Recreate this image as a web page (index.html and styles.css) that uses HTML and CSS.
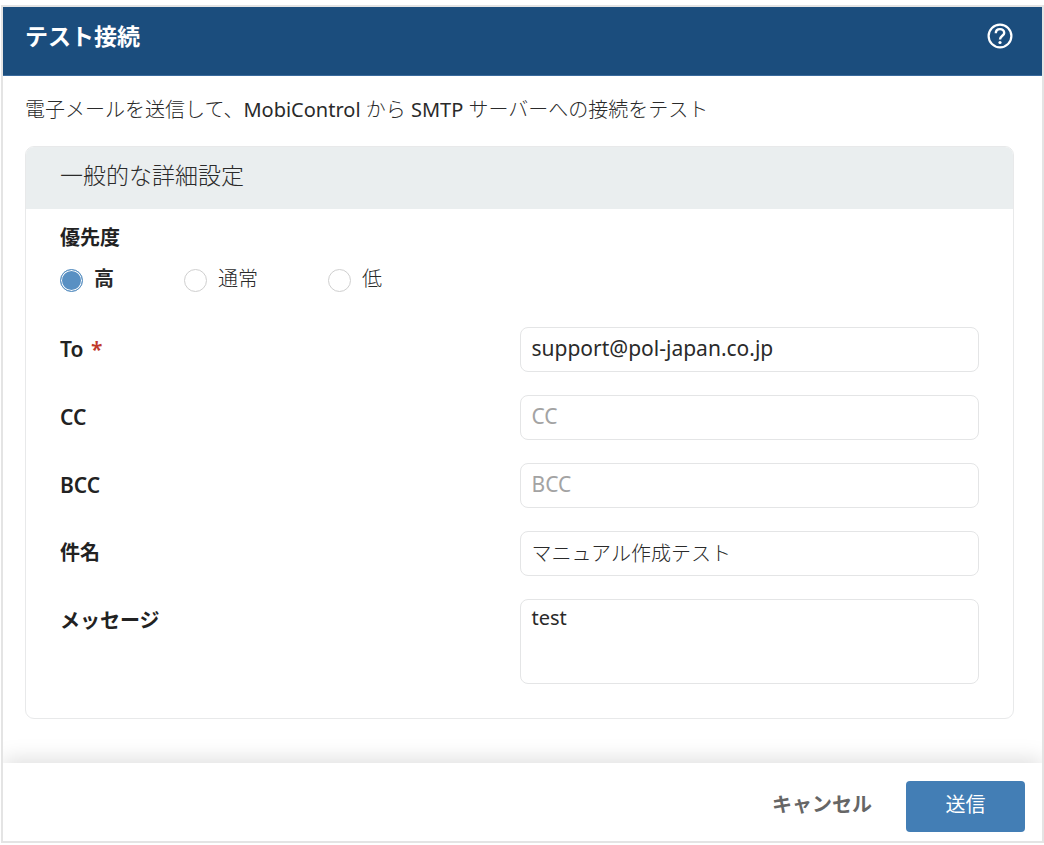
FILE: index.html
```
<!DOCTYPE html>
<html lang="ja">
<head>
<meta charset="utf-8">
<meta name="viewport" content="width=device-width, initial-scale=1">
<title>テスト接続</title>
<link rel="stylesheet" href="styles.css">
</head>
<body>
<form class="dialog">
  <header class="dialog-header">
    <h1 class="dialog-title">テスト接続</h1>
    <button class="help" type="button" aria-label="ヘルプ">
      <svg class="help-icon" viewBox="0 0 26 26" fill="none" stroke="currentColor">
        <circle cx="13" cy="13" r="11.4" stroke-width="2.2"/>
        <path d="M8.8 10.3C8.8 7.6 10.6 6.1 13 6.1S17.2 7.7 17.2 9.9C17.2 12.7 13 13 13 16.6" stroke-width="2.4"/>
        <circle cx="13" cy="19.5" r="1.6" fill="currentColor" stroke="none"/>
      </svg>
    </button>
  </header>
  <main class="dialog-body">
    <p class="intro">電子メールを送信して、<span class="term">MobiControl</span> から <span class="term">SMTP</span> サーバーへの接続をテスト</p>
    <section class="card">
      <h2 class="card-title">一般的な詳細設定</h2>
      <div class="card-body">
        <fieldset class="priority">
          <legend class="label">優先度</legend>
          <div class="options">
            <label class="option"><input class="radio" type="radio" name="priority" checked><span class="option-text">高</span></label>
            <label class="option"><input class="radio" type="radio" name="priority"><span class="option-text">通常</span></label>
            <label class="option"><input class="radio" type="radio" name="priority"><span class="option-text">低</span></label>
          </div>
        </fieldset>
        <div class="fields">
          <label class="label field-label latin" for="to">To <span class="required">*</span></label>
          <input class="input latin term" id="to" type="text" value="support@pol-japan.co.jp">
          <label class="label field-label latin" for="cc">CC</label>
          <input class="input latin term" id="cc" type="text" placeholder="CC">
          <label class="label field-label latin" for="bcc">BCC</label>
          <input class="input latin term" id="bcc" type="text" placeholder="BCC">
          <label class="label field-label" for="subject">件名</label>
          <input class="input" id="subject" type="text" value="マニュアル作成テスト">
          <label class="label field-label" for="message">メッセージ</label>
          <textarea class="input message term" id="message">test</textarea>
        </div>
      </div>
    </section>
  </main>
  <footer class="dialog-footer">
    <button class="button cancel" type="button">キャンセル</button>
    <button class="button send" type="submit">送信</button>
  </footer>
</form>
</body>
</html>
```
FILE: styles.css
```
* {
  box-sizing: border-box;
}

body {
  margin: 0;
  padding: 5px 0 2px 1px;
  background: #fff;
  color: #2a2a2a;
  font: 300 20px/28px "Noto Sans", "Noto Sans CJK JP", sans-serif;
}

input,
textarea,
button {
  font: inherit;
  color: inherit;
}

.dialog {
  display: flex;
  flex-direction: column;
  min-height: calc(100vh - 7px);
  border: 2px solid #e4e4e4;
}

.dialog-header {
  display: flex;
  align-items: center;
  justify-content: space-between;
  padding: 14px 29px 24px 22px;
  background: #1b4d7d;
  border-bottom: 1px solid #3a6a9c;
  color: #fff;
}

.dialog-title {
  margin: 0;
  font-size: 23px;
  line-height: 30px;
  font-weight: 700;
}

.help {
  display: flex;
  padding: 0;
  border: 0;
  background: none;
}

.help-icon {
  width: 26px;
  height: 26px;
}

.dialog-body {
  flex: 1;
  padding: 20px 28px 44px 22px;
}

.intro {
  margin: 0 0 22px;
}

.card {
  border: 1px solid #e8e9ea;
  border-radius: 9px;
  overflow: hidden;
}

.card-title {
  margin: 0;
  padding: 13px 34px 19px;
  background: #eaeeef;
  font-size: 23px;
  line-height: 30px;
  font-weight: 300;
}

.card-body {
  padding: 15px 34px 34px;
}

.priority {
  margin: 0 0 34px;
  padding: 0;
  border: 0;
}

.label {
  padding: 0;
  font-weight: 600;
  color: #222;
}

.options {
  display: flex;
  gap: 70px;
  padding-top: 13px;
}

.option {
  display: flex;
  align-items: center;
  gap: 11px;
}

.radio {
  appearance: none;
  width: 23px;
  height: 23px;
  margin: 3px 0 0;
  border: 1px solid #cfcfcf;
  border-radius: 50%;
  background: #fff;
}

.radio:checked {
  border-color: #5b91c2;
  background: #5990c3;
  box-shadow: inset 0 0 0 1px #fff;
}

.radio:checked + .option-text {
  font-weight: 600;
}

.fields {
  display: grid;
  grid-template-columns: 1fr 1fr;
  row-gap: 23px;
}

.field-label {
  padding-top: 8px;
}

.latin {
  font-size: 21px;
}

.term {
  font-weight: 400;
}

.required {
  margin-left: 2px;
  color: #c0392b;
}

.input {
  width: 100%;
  height: 45px;
  padding: 0 11px 3px;
  border: 1px solid #e4e5e6;
  border-radius: 8px;
  background: #fff;
  outline: 0;
}

.input::placeholder {
  color: #a3a3a3;
  opacity: 1;
}

.message {
  display: block;
  height: 85px;
  padding: 4px 11px;
  resize: none;
}

.dialog-footer {
  display: flex;
  align-items: center;
  justify-content: flex-end;
  gap: 34px;
  padding: 18px 17px 9px;
  background: #fff;
  box-shadow: 0 -4px 20px rgba(0, 0, 0, 0.13);
  clip-path: inset(-30px 0 0 0);
}

.button {
  height: 51px;
  padding: 0 0 4px;
  border: 0;
  border-radius: 4px;
  background: none;
}

.cancel {
  color: #666;
  font-weight: 600;
}

.send {
  width: 119px;
  background: #437eb5;
  color: #fff;
  font-weight: 400;
}
```
